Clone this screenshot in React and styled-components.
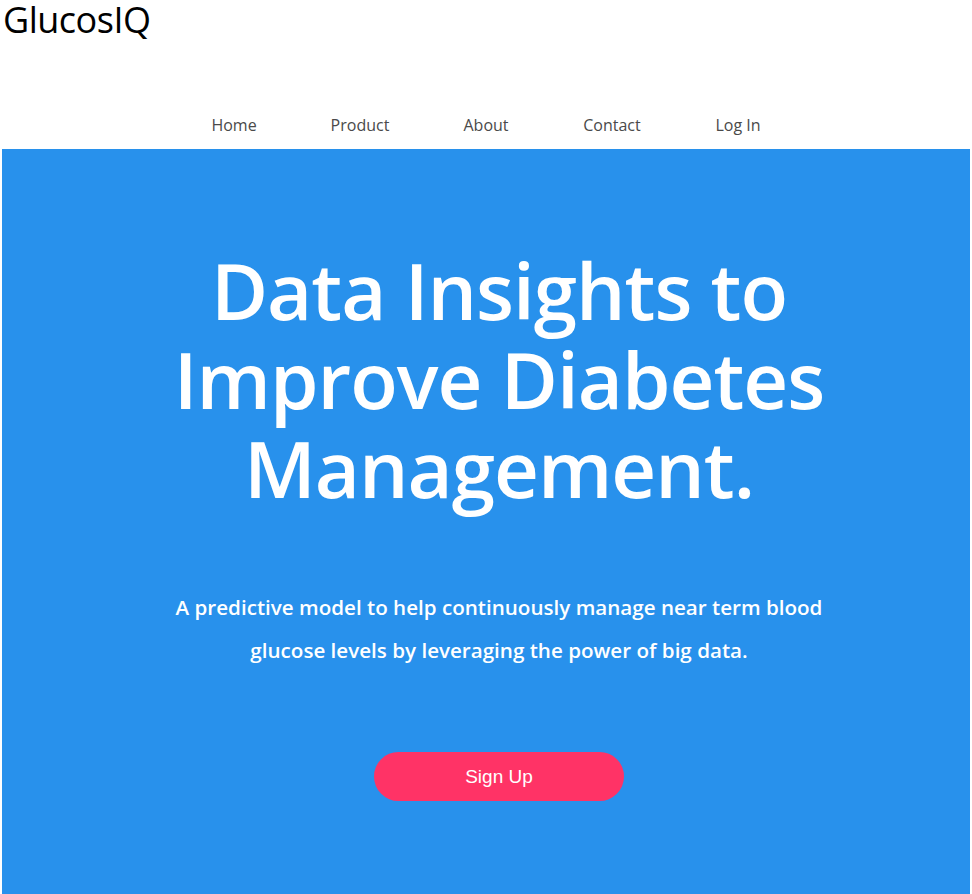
import React from 'react'
import styled, { createGlobalStyle } from 'styled-components'

const GlobalStyle = createGlobalStyle`
  body {
    margin: 0;
    background: #ffffff;
    font-family: "Open Sans", "Noto Sans", sans-serif;
  }
`

const navItems = ['Home', 'Product', 'About', 'Contact', 'Log In']

const App = () => {
    return (
        <>
            <GlobalStyle />
            <Page>
                <Logo>GlucosIQ</Logo>
                <Nav>
                    {navItems.map((item) => (
                        <NavLink key={item} href="#">{item}</NavLink>
                    ))}
                </Nav>
                <Hero>
                    <Title>Data Insights to<br />Improve Diabetes<br />Management.</Title>
                    <Subtitle>
                        A predictive model to help continuously manage near term blood<br />
                        glucose levels by leveraging the power of big data.
                    </Subtitle>
                    <SignUp>Sign Up</SignUp>
                </Hero>
            </Page>
        </>
    )
}

export default App

const Page = styled.div`
    display: flex;
    flex-direction: column;
    min-height: 894px;
`
const Logo = styled.h1`
    margin: 0;
    padding: 0 0 0 3px;
    font-size: 36px;
    line-height: 40px;
    font-weight: 400;
    color: #000;
    letter-spacing: -0.5px;
`
const Nav = styled.nav`
    display: flex;
    justify-content: center;
    margin-top: 67px;
    height: 42px;
`
const NavLink = styled.a`
    width: 126px;
    text-align: center;
    font-size: 16px;
    line-height: 36px;
    color: #4a4a4a;
    text-decoration: none;
`
const Hero = styled.section`
    flex: 1;
    margin: 0 2px;
    background: #2891ec;
    display: flex;
    flex-direction: column;
    align-items: center;
    padding: 97px 0 0 26px;
    color: #fff;
`
const Title = styled.h2`
    margin: 0;
    font-size: 78px;
    line-height: 89px;
    font-weight: 600;
    text-align: center;
    letter-spacing: -1px;
`
const Subtitle = styled.p`
    margin: 73px 0 0;
    font-size: 20.6px;
    line-height: 43px;
    font-weight: 600;
    text-align: center;
`
const SignUp = styled.button`
    margin-top: 80px;
    width: 250px;
    height: 49px;
    border: none;
    border-radius: 25px;
    background: #ff3366;
    color: #fff;
    font-family: "Liberation Sans", Arial, sans-serif;
    font-size: 19px;
    cursor: pointer;
`
